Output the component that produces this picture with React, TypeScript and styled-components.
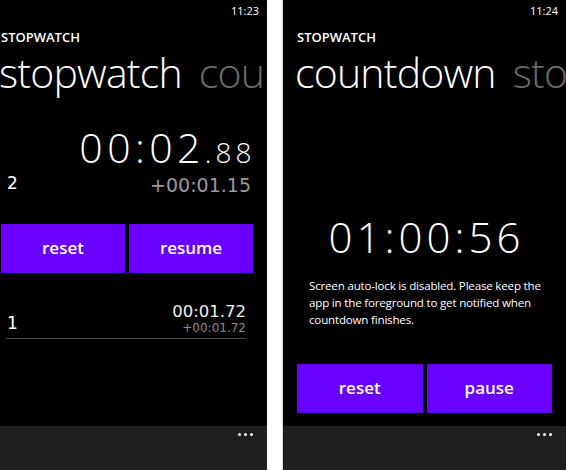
import React from 'react';
import styled, { createGlobalStyle } from 'styled-components';

const GlobalStyle = createGlobalStyle`
	html, body {
		margin: 0;
		padding: 0;
		background: #ffffff;
	}
	* {
		box-sizing: border-box;
	}
`;

const UI = `'Open Sans', 'Noto Sans', sans-serif`;
const NUM = `'DejaVu Sans', 'Verdana', sans-serif`;

const NOTICE_LINES = [
	'Screen auto-lock is disabled. Please keep the',
	'app in the foreground to get notified when',
	'countdown finishes.',
];

type TPhone = {
	width: number;
	cropLeft?: number;
	clock: string;
	pivots: [string, string];
	children: React.ReactNode;
};

function Phone({ width, cropLeft = 0, clock, pivots, children }: TPhone) {
	return (
		<Screen $w={width}>
			<Content $crop={cropLeft}>
				<StatusBar>{clock}</StatusBar>
				<AppTitle>STOPWATCH</AppTitle>
				<PivotRow>
					<PivotItem>{pivots[0]}</PivotItem>
					<PivotItem $dim>{pivots[1]}</PivotItem>
				</PivotRow>
				<Page>{children}</Page>
			</Content>
			<AppBar>
				<Dots>
					<Dot />
					<Dot />
					<Dot />
				</Dots>
			</AppBar>
		</Screen>
	);
}

export default function App() {
	return (
		<Wrap>
			<GlobalStyle />
			<Phone width={267} cropLeft={13} clock="11:23" pivots={['stopwatch', 'countdown']}>
				<ElapsedBlock>
					<MainTime>
						00:02<small>.88</small>
					</MainTime>
					<SplitRow>
						<LapIndex>2</LapIndex>
						<SplitTime>+00:01.15</SplitTime>
					</SplitRow>
				</ElapsedBlock>
				<ButtonRow $top={29}>
					<ActionButton>reset</ActionButton>
					<ActionButton>resume</ActionButton>
				</ButtonRow>
				<LapList>
					<Lap>
						<LapIndex>1</LapIndex>
						<LapTimes>
							<LapTotal>00:01.72</LapTotal>
							<LapDelta>+00:01.72</LapDelta>
						</LapTimes>
					</Lap>
				</LapList>
			</Phone>
			<Gutter />
			<Phone width={283} clock="11:24" pivots={['countdown', 'stopwatch']}>
				<Countdown>01:00:56</Countdown>
				<Notice>
					{NOTICE_LINES.map((line, i) => (
						<NoticeLine key={i}>{line}</NoticeLine>
					))}
				</Notice>
				<ButtonRow $top={36}>
					<ActionButton>reset</ActionButton>
					<ActionButton>pause</ActionButton>
				</ButtonRow>
			</Phone>
		</Wrap>
	);
}

const Wrap = styled.div`
	display: flex;
	width: 566px;
	height: 470px;
	overflow: hidden;
`;

const Gutter = styled.div`
	width: 16px;
	flex: none;
	background: #ffffff;
	border-right: 1px solid #d6d6d6;
`;

const Screen = styled.div<{ $w: number }>`
	width: ${({ $w }) => $w}px;
	flex: none;
	height: 470px;
	background: #000000;
	color: #ffffff;
	display: flex;
	flex-direction: column;
	overflow: hidden;
`;

const Content = styled.div<{ $crop: number }>`
	flex: 1;
	display: flex;
	flex-direction: column;
	margin-left: -${({ $crop }) => $crop}px;
	min-height: 0;
`;

const StatusBar = styled.div`
	height: 22px;
	display: flex;
	align-items: center;
	justify-content: flex-end;
	padding: 0 8px 2px 0;
	font-family: ${UI};
	font-size: 11px;
	color: #ffffff;
`;

const AppTitle = styled.div`
	margin-top: 7px;
	padding-left: 14px;
	font-family: ${UI};
	font-weight: 600;
	font-size: 13px;
	line-height: 16px;
`;

const PivotRow = styled.div`
	display: flex;
	gap: 17px;
	margin-top: 3px;
	padding-left: 12px;
	white-space: nowrap;
`;

const PivotItem = styled.div<{ $dim?: boolean }>`
	font-family: ${UI};
	font-weight: 300;
	font-size: 41px;
	line-height: 48px;
	letter-spacing: -0.8px;
	color: ${({ $dim }) => ($dim ? '#6b6b6b' : '#ffffff')};
`;

const Page = styled.div`
	flex: 1;
	display: flex;
	flex-direction: column;
`;

const ElapsedBlock = styled.div`
	margin-top: 29px;
	padding: 0 16px 0 20px;
	display: flex;
	flex-direction: column;
	align-items: stretch;
`;

const MainTime = styled.div`
	align-self: flex-end;
	margin-right: -4.4px;
	font-family: ${UI};
	font-weight: 300;
	font-size: 41px;
	line-height: 44px;
	letter-spacing: 4.4px;

	small {
		font-size: 28px;
		letter-spacing: 4px;
	}
`;

const SplitRow = styled.div`
	display: flex;
	justify-content: space-between;
	align-items: flex-end;
	margin-top: -1px;
`;

const LapIndex = styled.div`
	font-family: ${NUM};
	font-size: 17px;
	line-height: 20px;
	padding-bottom: 2px;
`;

const SplitTime = styled.div`
	font-family: ${NUM};
	font-size: 19px;
	line-height: 20px;
	color: #9a9a9a;
`;

const ButtonRow = styled.div<{ $top: number }>`
	display: grid;
	grid-template-columns: 1fr 1fr;
	gap: 4px;
	margin-top: ${({ $top }) => $top}px;
	padding: 0 14px;
`;

const ActionButton = styled.div`
	height: 49px;
	background: #6a00ff;
	display: flex;
	align-items: center;
	justify-content: center;
	font-family: ${UI};
	font-weight: 600;
	font-size: 17px;
	padding-bottom: 2px;
	color: #ffffff;
`;

const LapList = styled.div`
	margin-top: 30px;
	padding: 0 21px 0 19px;
`;

const Lap = styled.div`
	display: flex;
	justify-content: space-between;
	align-items: flex-end;
	border-bottom: 1px solid #4a4a4a;
	padding: 0 0 3px 1px;
`;

const LapTimes = styled.div`
	display: flex;
	flex-direction: column;
	align-items: flex-end;
`;

const LapTotal = styled.div`
	font-family: ${NUM};
	font-size: 16.5px;
	line-height: 18px;
	color: #f0f0f0;
`;

const LapDelta = styled.div`
	font-family: ${NUM};
	font-size: 12px;
	line-height: 14px;
	color: #8c8c8c;
`;

const Countdown = styled.div`
	margin-top: 117px;
	text-align: center;
	font-family: ${UI};
	font-weight: 300;
	font-size: 42px;
	line-height: 48px;
	letter-spacing: 4px;
	padding-left: 4px;
`;

const Notice = styled.div`
	margin-top: 16px;
	padding-left: 26px;
	display: flex;
	flex-direction: column;
	font-family: ${UI};
	font-size: 11.6px;
	line-height: 17px;
	letter-spacing: -0.2px;
`;

const NoticeLine = styled.span`
	white-space: nowrap;
`;

const AppBar = styled.div`
	height: 44px;
	flex: none;
	background: #1f1f1f;
	display: flex;
	justify-content: flex-end;
	align-items: flex-start;
	padding: 7px 14px 0 0;
`;

const Dots = styled.div`
	display: flex;
	gap: 3px;
`;

const Dot = styled.span`
	width: 3px;
	height: 3px;
	border-radius: 50%;
	background: #ffffff;
`;
